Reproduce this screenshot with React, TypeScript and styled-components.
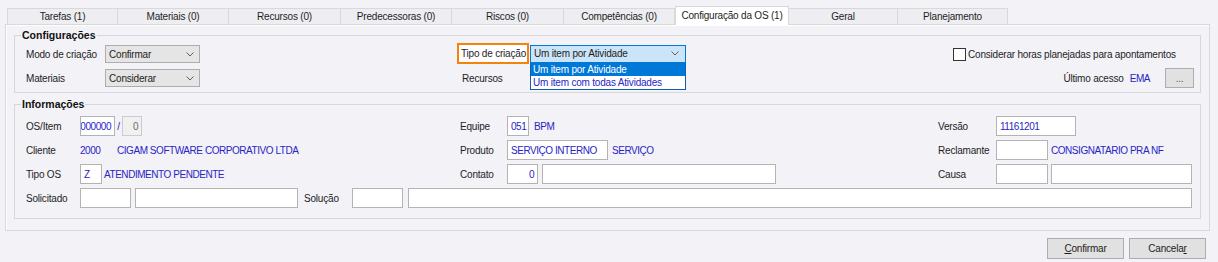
import React from "react";
import styled, { createGlobalStyle, css } from "styled-components";

const GlobalStyle = createGlobalStyle`
  body {
    margin: 0;
    background: #f2f2f7;
    font-family: "Liberation Sans", Arial, sans-serif;
    font-size: 10px;
    letter-spacing: -0.2px;
    color: #1e1e1e;
  }
`;

const tabs = [
  { label: "Tarefas (1)", w: 111 },
  { label: "Materiais (0)", w: 111 },
  { label: "Recursos (0)", w: 112 },
  { label: "Predecessoras (0)", w: 111 },
  { label: "Riscos (0)", w: 112 },
  { label: "Competências (0)", w: 111 },
  { label: "Configuração da OS (1)", w: 114, active: true },
  { label: "Geral", w: 109 },
  { label: "Planejamento", w: 110 },
];

const Chevron = () => (
  <svg width="8" height="5" viewBox="0 0 8 5">
    <polyline points="0.5,0.5 4,4 7.5,0.5" fill="none" stroke="#606060" strokeWidth="1" />
  </svg>
);

const App = () => {
  return (
    <Window>
      <GlobalStyle />
      <TabBar>
        {tabs.map((t) => (
          <Tab key={t.label} $w={t.w} $active={!!t.active}>
            {t.label}
          </Tab>
        ))}
      </TabBar>
      <Panel>
        <Group $pt={3} $pb={5}>
          <Legend>Configurações</Legend>
          <ConfigGrid>
            <Cell>
              <Label $w={79}>Modo de criação</Label>
              <Select>
                <span>Confirmar</span>
                <Chevron />
              </Select>
            </Cell>
            <Cell>
              <Highlight>Tipo de criação</Highlight>
              <ComboWrap>
                <Combo>
                  <span>Um item por Atividade</span>
                  <Chevron />
                </Combo>
                <DropList>
                  <DropItem $selected>Um item por Atividade</DropItem>
                  <DropItem>Um item com todas Atividades</DropItem>
                </DropList>
              </ComboWrap>
            </Cell>
            <Cell>
              <CheckBox />
              <span>Considerar horas planejadas para apontamentos</span>
            </Cell>
            <Cell>
              <Label $w={79}>Materiais</Label>
              <Select>
                <span>Considerar</span>
                <Chevron />
              </Select>
            </Cell>
            <Cell>
              <Label $w={60} $indent={5}>
                Recursos
              </Label>
            </Cell>
            <Cell $end>
              <span>Último acesso</span>
              <Value $gap={6}>EMA</Value>
              <DotsButton>...</DotsButton>
            </Cell>
          </ConfigGrid>
        </Group>
        <Group $pt={5} $pb={10}>
          <Legend>Informações</Legend>
          <InfoGrid>
            <Cell>
              <Label $w={54}>OS/Item</Label>
              <Field $w={35} $right>
                1000000
              </Field>
              <Slash>/</Slash>
              <Field $w={20} $right $disabled>
                0
              </Field>
            </Cell>
            <Cell>
              <Label $w={47}>Equipe</Label>
              <Field $w={22}>051</Field>
              <Value $gap={5}>BPM</Value>
            </Cell>
            <Cell>
              <Label $w={58}>Versão</Label>
              <Field $w={80}>11161201</Field>
            </Cell>

            <Cell>
              <Label $w={54}>Cliente</Label>
              <Value $w={37}>2000</Value>
              <Value>CIGAM SOFTWARE CORPORATIVO LTDA</Value>
            </Cell>
            <Cell>
              <Label $w={47}>Produto</Label>
              <Field $w={101}>SERVIÇO INTERNO</Field>
              <Value $gap={4}>SERVIÇO</Value>
            </Cell>
            <Cell>
              <Label $w={58}>Reclamante</Label>
              <Field $w={52} />
              <Value $gap={3}>CONSIGNATARIO PRA NF</Value>
            </Cell>

            <Cell>
              <Label $w={54}>Tipo OS</Label>
              <Field $w={22}>Z</Field>
              <Value $gap={2}>ATENDIMENTO PENDENTE</Value>
            </Cell>
            <Cell>
              <Label $w={47}>Contato</Label>
              <Field $w={31} $right>
                0
              </Field>
              <Field $w={234} $gap={4} />
            </Cell>
            <Cell>
              <Label $w={58}>Causa</Label>
              <Field $w={52} />
              <Field $grow $gap={3} />
            </Cell>

            <WideCell>
              <Label $w={54}>Solicitado</Label>
              <Field $w={51} />
              <Field $w={163} $gap={4} />
              <Label $w={48} $indent={6}>
                Solução
              </Label>
              <Field $w={51} />
              <Field $grow $gap={5} />
            </WideCell>
          </InfoGrid>
        </Group>
      </Panel>
      <Footer>
        <Button>
          <u>C</u>onfirmar
        </Button>
        <Button>
          Cancela<u>r</u>
        </Button>
      </Footer>
    </Window>
  );
};

const Window = styled.div`
  width: 1218px;
  height: 262px;
  padding-top: 8px;
  box-sizing: border-box;
  overflow: hidden;
`;

const TabBar = styled.div`
  display: flex;
  align-items: flex-end;
  height: 16px;
  padding-left: 7px;
`;

const Tab = styled.div<{ $w: number; $active: boolean }>`
  width: ${(p) => p.$w}px;
  height: 16px;
  box-sizing: border-box;
  display: flex;
  align-items: center;
  justify-content: center;
  background: #eeeef2;
  border-top: 1px solid #d9d9d9;
  border-right: 1px solid #d9d9d9;
  &:first-child {
    border-left: 1px solid #d9d9d9;
  }
  ${(p) =>
    p.$active &&
    css`
      height: 19px;
      margin-top: -2px;
      margin-bottom: -1px;
      background: #ffffff;
      border-left: 1px solid #d9d9d9;
      position: relative;
      z-index: 1;
      padding-bottom: 2px;
    `}
`;

const Panel = styled.div`
  margin: 0 8px 0 5px;
  border: 1px solid #d9d9d9;
  box-shadow: inset 1px 1px 0 #ffffff;
  padding: 4px 8px 11px;
`;

const Group = styled.fieldset<{ $pt: number; $pb: number }>`
  margin: 0;
  min-width: 0;
  border: 1px solid #d6d6dc;
  padding: ${(p) => p.$pt}px 8px ${(p) => p.$pb}px 11px;
  & + & {
    margin-top: 5px;
  }
`;

const Legend = styled.legend`
  font-weight: bold;
  font-size: 10.5px;
  letter-spacing: 0;
  line-height: 13px;
  padding: 0 1px;
  margin-left: -5px;
  color: #111;
`;

const ConfigGrid = styled.div`
  display: grid;
  grid-template-columns: 431px 496px 1fr;
  grid-auto-rows: 18px;
  row-gap: 6px;
`;

const InfoGrid = styled.div`
  display: grid;
  grid-template-columns: 434px 478px 1fr;
  grid-auto-rows: 20px;
  row-gap: 4px;
`;

const Cell = styled.div<{ $end?: boolean }>`
  display: flex;
  align-items: center;
  white-space: nowrap;
  ${(p) =>
    p.$end &&
    css`
      justify-content: flex-end;
    `}
`;

const WideCell = styled(Cell)`
  grid-column: 1 / -1;
`;

const Label = styled.span<{ $w: number; $indent?: number }>`
  flex: none;
  width: ${(p) => p.$w}px;
  margin-left: ${(p) => p.$indent || 0}px;
`;

const Value = styled.span<{ $w?: number; $gap?: number }>`
  color: #2a24c4;
  letter-spacing: -0.45px;
  margin-left: ${(p) => p.$gap || 0}px;
  ${(p) =>
    p.$w &&
    css`
      width: ${p.$w}px;
      flex: none;
    `}
`;

const Select = styled.div`
  width: 95px;
  height: 18px;
  box-sizing: border-box;
  display: flex;
  align-items: center;
  justify-content: space-between;
  padding: 0 5px 0 3px;
  background: #e5e5e5;
  border: 1px solid #adadad;
`;

const Highlight = styled.span`
  width: 72px;
  height: 21px;
  box-sizing: border-box;
  margin: -2px 1px -1px 0;
  display: flex;
  align-items: center;
  padding: 0 2px;
  background: #ffffff;
  border: 2px solid #f5820d;
`;

const ComboWrap = styled.div`
  position: relative;
  margin-top: -1px;
`;

const Combo = styled(Select)`
  width: 156px;
  padding-right: 6px;
  background: #cce4f7;
  border-color: #0078d7;
`;

const DropList = styled.div`
  position: absolute;
  top: 100%;
  left: 0;
  width: 156px;
  box-sizing: border-box;
  border: 1px solid #0f5fb0;
  border-top: none;
  background: #ffffff;
  z-index: 2;
`;

const DropItem = styled.div<{ $selected?: boolean }>`
  height: 13px;
  line-height: 13px;
  padding: 0 2px;
  color: #2a24c4;
  ${(p) =>
    p.$selected &&
    css`
      background: #0078d7;
      color: #ffffff;
    `}
`;

const CheckBox = styled.span`
  width: 13px;
  height: 13px;
  box-sizing: border-box;
  border: 1px solid #333333;
  background: #ffffff;
  margin-right: 2px;
  flex: none;
`;

const DotsButton = styled.div`
  width: 29px;
  height: 20px;
  box-sizing: border-box;
  margin: 0 -2px 0 15px;
  display: flex;
  align-items: flex-end;
  justify-content: center;
  padding-bottom: 3px;
  background: #e1e1e1;
  border: 1px solid #adadad;
  color: #555;
`;

const Field = styled.div<{
  $w?: number;
  $grow?: boolean;
  $gap?: number;
  $right?: boolean;
  $disabled?: boolean;
}>`
  height: 20px;
  box-sizing: border-box;
  flex: ${(p) => (p.$grow ? "1" : "none")};
  width: ${(p) => (p.$w ? `${p.$w}px` : "auto")};
  margin-left: ${(p) => p.$gap || 0}px;
  display: flex;
  align-items: center;
  justify-content: ${(p) => (p.$right ? "flex-end" : "flex-start")};
  overflow: hidden;
  padding: 0 3px;
  letter-spacing: -0.45px;
  background: #ffffff;
  border: 1px solid #b3b3b3;
  color: #2a24c4;
  ${(p) =>
    p.$disabled &&
    css`
      background: #f0f0f0;
      border-color: #cccccc;
      color: #6d6d6d;
    `}
`;

const Slash = styled.span`
  width: 7px;
  text-align: center;
  color: #2a24c4;
`;

const Footer = styled.div`
  display: flex;
  justify-content: flex-end;
  gap: 5px;
  margin-top: 7px;
  padding-right: 12px;
`;

const Button = styled.div`
  width: 77px;
  height: 21px;
  box-sizing: border-box;
  display: flex;
  align-items: center;
  justify-content: center;
  background: #e1e1e1;
  border: 1px solid #adadad;
`;

export default App;
